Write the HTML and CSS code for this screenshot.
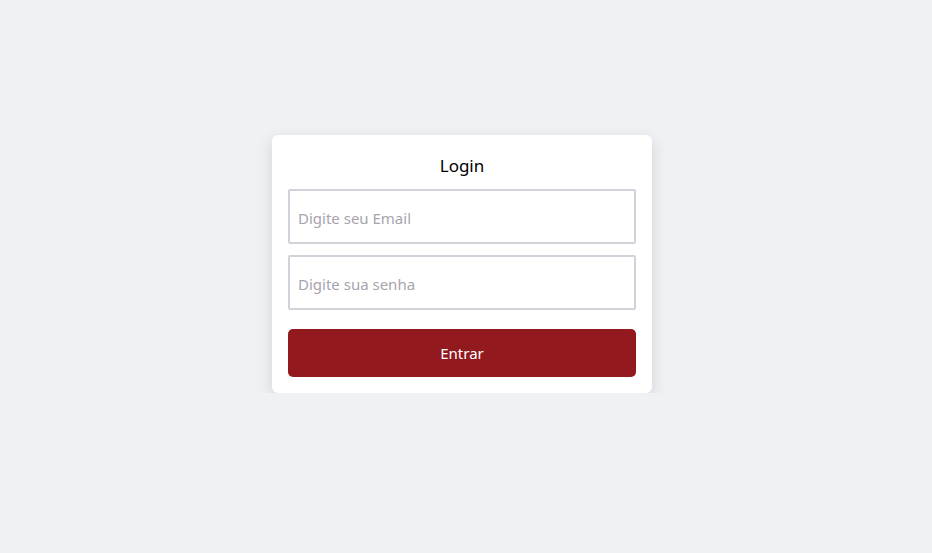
FILE: index.html
```html
<!DOCTYPE html>
<html lang="pt-BR">
<head>
<meta charset="utf-8">
<title>Login</title>
<link rel="stylesheet" href="styles.css">
</head>
<body>
<main class="page">
  <form class="card">
    <h1 class="title">Login</h1>
    <input class="field" type="email" placeholder="Digite seu Email">
    <input class="field" type="password" placeholder="Digite sua senha">
    <button class="btn" type="button">Entrar</button>
  </form>
</main>
</body>
</html>
```

FILE: styles.css
```css
html, body {
  margin: 0;
  padding: 0;
  background: #f0f1f5;
  font-family: "Noto Sans", "Open Sans", sans-serif;
}
.page {
  display: flex;
  justify-content: center;
  padding: 135px 8px 0 0;
}
.card {
  width: 380px;
  box-sizing: border-box;
  background: #ffffff;
  border-radius: 6px;
  padding: 16px;
  display: flex;
  flex-direction: column;
  box-shadow: 0 5px 16px rgba(0, 0, 0, 0.13);
}
.title {
  margin: 0 0 9px;
  padding-top: 1px;
  font-size: 17px;
  line-height: 28px;
  font-weight: 400;
  text-align: center;
  color: #000;
}
.field {
  height: 55px;
  box-sizing: border-box;
  border: 2px solid #d1d3da;
  border-radius: 2px;
  padding: 2px 8px 0;
  font-family: inherit;
  font-size: 15px;
  color: #333;
  outline: none;
}
.field + .field {
  margin-top: 11px;
}
.field::placeholder {
  color: #a7a4ad;
}
.btn {
  margin-top: 19px;
  height: 48px;
  border: none;
  border-radius: 5px;
  background: #921a1f;
  color: #fff;
  font-family: inherit;
  font-size: 15px;
  cursor: pointer;
}
```
